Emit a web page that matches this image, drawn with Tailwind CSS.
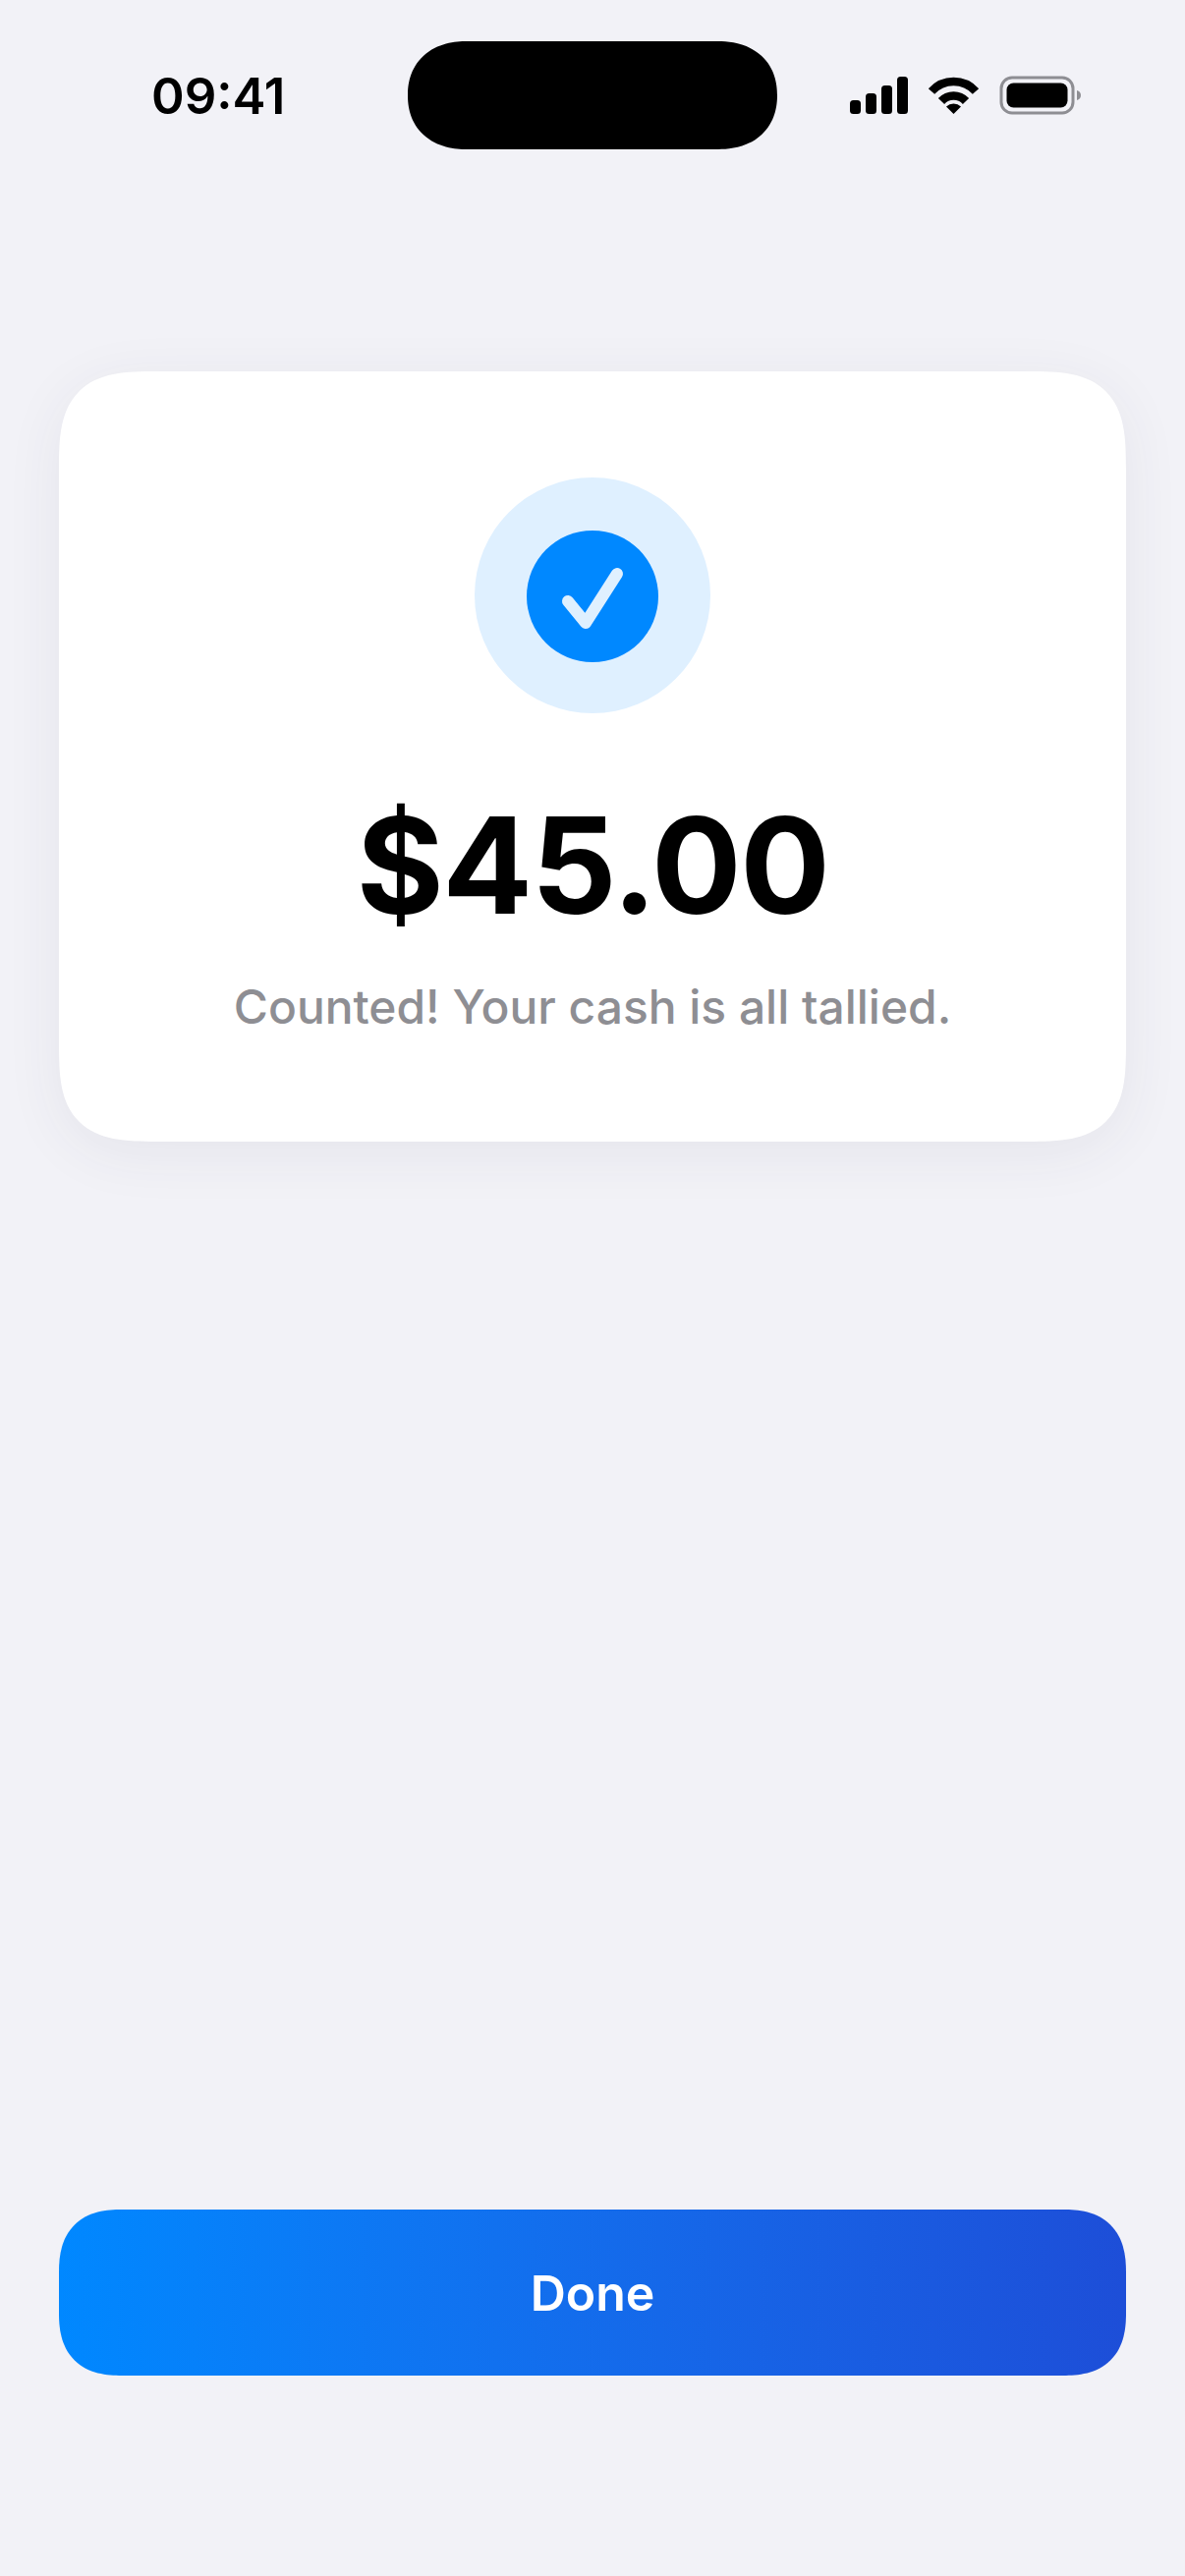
<!DOCTYPE html>
<html lang="en">
<head>
  <meta charset="UTF-8" />
  <meta name="viewport" content="width=device-width, initial-scale=1.0" />
  <title>Counted</title>
  <script src="https://cdn.jsdelivr.net/npm/@tailwindcss/browser@4"></script>
</head>
<body class="bg-[#f2f2f7] font-['Inter',sans-serif] text-black">
  <div class="w-[1206px] h-[2622px] flex flex-col overflow-hidden">

    <!-- Status bar -->
    <div class="h-[378px] shrink-0 pt-[42px] relative">
      <div class="flex items-center h-[110px]">
        <div class="w-[415px] pl-[154px] text-[51px] leading-none font-semibold">09:41</div>
        <div class="w-[376px] h-[110px] bg-black rounded-[60px/55px] [corner-shape:superellipse(1.15)]"></div>
        <div class="flex-1 pl-[74px] flex items-center">
          <svg width="236" height="44" viewBox="0 0 236 44" fill="none">
            <!-- signal -->
            <rect x="0" y="27" width="11" height="14" rx="3.5" fill="#000"/>
            <rect x="16" y="20" width="11" height="21" rx="3.5" fill="#000"/>
            <rect x="32" y="12" width="11" height="29" rx="3.5" fill="#000"/>
            <rect x="48" y="3" width="11" height="38" rx="3.5" fill="#000"/>
            <!-- wifi -->
            <path d="M83 18A30.300 30.300 0 0 1 128 18" stroke="#000" stroke-width="8.500"/>
            <path d="M93 28A17 17 0 0 1 118 28" stroke="#000" stroke-width="8.500"/>
            <path d="M105.500 41L98 33.500a11 11 0 0 1 15 0z" fill="#000"/>
            <!-- battery -->
            <rect x="154" y="4" width="73" height="36" rx="11" stroke="#8e8e93" stroke-width="3"/>
            <rect x="159.500" y="9.500" width="62" height="25" rx="7" fill="#000"/>
            <path d="M231 17c2.500.6 4 2.500 4 5s-1.500 4.400-4 5z" fill="#8e8e93"/>
          </svg>
        </div>
      </div>
    </div>

    <!-- Result card -->
    <div class="mx-[60px] h-[784px] shrink-0 bg-white rounded-[100px] [corner-shape:superellipse(1.6)] shadow-[0_12px_60px_rgba(60,60,90,0.07)] flex flex-col items-center pt-[108px]">
      <div class="w-[240px] h-[240px] rounded-full bg-[#dff0ff] flex items-center justify-center">
        <div class="w-[134px] h-[134px] mt-[1px] rounded-full bg-[#0088ff] flex items-center justify-center">
          <svg width="134" height="134" viewBox="0 0 134 134" fill="none">
            <path d="M42 72L60 94L92 44" stroke="#dff0ff" stroke-width="12" stroke-linecap="round" stroke-linejoin="round"/>
          </svg>
        </div>
      </div>
      <div class="mt-[70px] text-[136px] leading-[170px] font-bold tracking-[-1.5px]">$45.00</div>
      <div class="mt-[30px] text-[47.9px] leading-[58px] font-[450] text-[#8e8e93]">Counted! Your cash is all tallied.</div>
    </div>

    <div class="flex-1"></div>

    <!-- Done button -->
    <button class="mx-[60px] mb-[204px] h-[169px] shrink-0 pt-[1px] rounded-[64px] [corner-shape:superellipse(1.3)] bg-gradient-to-r from-[#0088ff] to-[#1d4ed8] text-white text-[50px] font-semibold">Done</button>
  </div>
</body>
</html>
